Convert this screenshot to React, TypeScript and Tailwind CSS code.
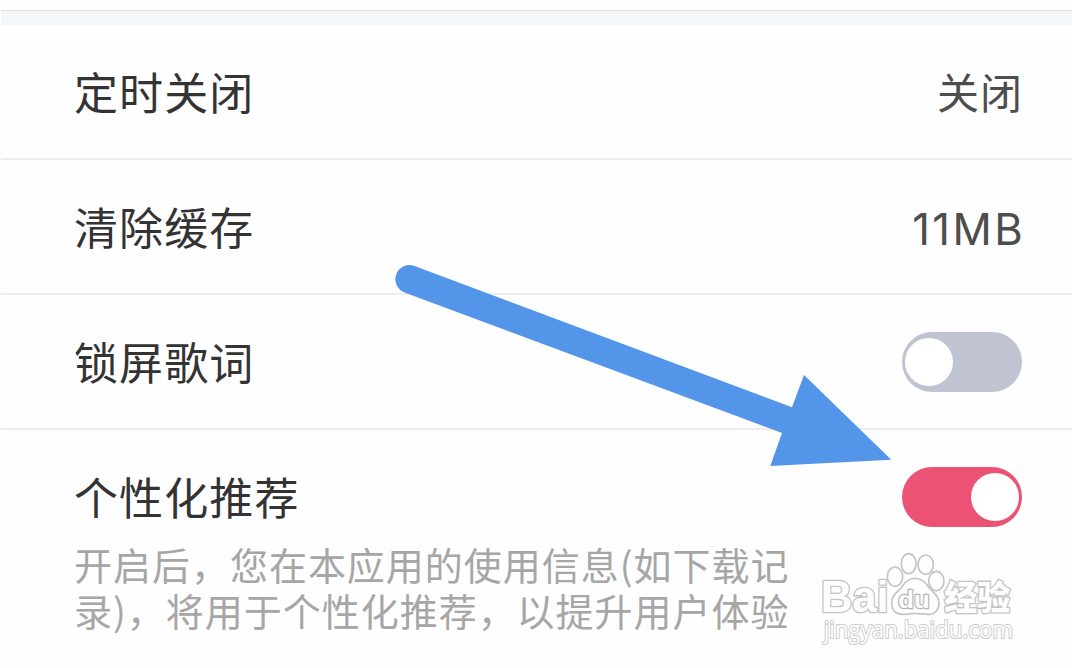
import React, { ReactNode } from 'react';

interface SwitchProps {
  on: boolean;
}

interface RowProps {
  label: string;
  note?: string[];
  last?: boolean;
  children: ReactNode;
}

const Switch: React.FC<SwitchProps> = ({ on }) => {
  return (
    <button
      type="button"
      role="switch"
      aria-checked={on}
      className={`flex h-[60px] w-[120px] shrink-0 items-center rounded-full px-[3px] ${on ? 'justify-end bg-[#ec5273]' : 'justify-start bg-[#c0c3d2]'}`}
    >
      <span className="h-12 w-12 rounded-full bg-white" />
    </button>
  );
};

const Row: React.FC<RowProps> = ({ label, note, last, children }) => {
  return (
    <div className={`pt-[37px] pr-[50px] pl-[73px] ${last ? '' : 'h-[135px] border-b-2 border-[#ededed]'}`}>
      <div className="flex h-[60px] items-center justify-between">
        <span className="pb-px text-[44px] leading-[59px] tracking-[1.1px] text-[#333333]">{label}</span>
        {children}
      </div>
      {note && (
        <div className="mt-[14px] text-[38px] leading-[46px] tracking-[0.98px] whitespace-nowrap text-[#a6a6a6]">
          {note.map((line) => (
            <p key={line}>{line}</p>
          ))}
        </div>
      )}
    </div>
  );
};

const Arrow: React.FC = () => {
  return (
    <svg className="pointer-events-none absolute top-0 left-0" width="1072" height="668" viewBox="0 0 1072 668" fill="#5395e9">
      <path d="M414.5 266 792 407.3 804 375 891.3 459.7 770.3 466 782 433 404.5 292.5A14 14 0 0 1 414.5 266Z" />
    </svg>
  );
};

const Watermark: React.FC = () => {
  return (
    <svg
      className="pointer-events-none absolute top-[540px] left-[810px]"
      width="220"
      height="128"
      viewBox="0 0 660 384"
      fill="#fefefe"
      stroke="#c4c4c4"
      strokeWidth="5"
      strokeLinejoin="round"
    >
      <text x="32" y="217" fontSize="132" fontWeight="700" textLength="204" lengthAdjust="spacingAndGlyphs" paintOrder="stroke" strokeWidth="8" className="font-['Liberation_Sans',sans-serif]">
        Bai
      </text>
      <ellipse cx="255" cy="110" rx="23" ry="29" />
      <ellipse cx="296" cy="71" rx="22" ry="30" />
      <ellipse cx="347" cy="74" rx="23" ry="29" />
      <ellipse cx="379" cy="123" rx="23" ry="29" />
      <path d="M315 115C292 115 283 131 273 144C262 157 245 165 245 190C245 212 259 223 278 223C292 223 302 220 315 220C329 220 341 223 354 223C375 223 387 209 387 190C387 166 369 157 358 144C347 130 338 115 315 115Z" />
      <text x="265" y="203" fontSize="72" fontWeight="700" textLength="94" lengthAdjust="spacingAndGlyphs" paintOrder="stroke" strokeWidth="7" stroke="#b4b4b4" className="font-['Liberation_Sans',sans-serif]">
        du
      </text>
      <text x="403" y="209" fontSize="102" fontWeight="900" textLength="198" lengthAdjust="spacingAndGlyphs" paintOrder="stroke" strokeWidth="8" className="font-['Noto_Sans_CJK_SC',sans-serif]">
        经验
      </text>
      <text x="41" y="295" fontSize="69" fontWeight="500" textLength="568" lengthAdjust="spacingAndGlyphs" paintOrder="stroke" strokeWidth="6" stroke="#cccccc" className="font-['Open_Sans',sans-serif]">
        jingyan.baidu.com
      </text>
    </svg>
  );
};

const App: React.FC = () => {
  return (
    <div className="relative h-[668px] w-[1072px] overflow-hidden bg-[#fefefe] pl-px font-['Noto_Sans_CJK_SC',sans-serif]">
      <div className="mt-2.5 h-[15px] border-t border-[#dfdfdf] bg-[#f5f6f8]" />
      <Row label="定时关闭">
        <span className="pb-0.5 text-[42px] leading-[58px] tracking-[1px] -mr-px text-[#4d4d4d]">关闭</span>
      </Row>
      <Row label="清除缓存">
        <span className="-mr-[3px] pt-[5px] font-['Inter',sans-serif] text-[43.5px] leading-[55px] tracking-[2.4px] text-[#4d4d4d]">11MB</span>
      </Row>
      <Row label="锁屏歌词">
        <Switch on={false} />
      </Row>
      <Row
        label="个性化推荐"
        note={['开启后，您在本应用的使用信息(如下载记', '录)，将用于个性化推荐，以提升用户体验']}
        last
      >
        <Switch on />
      </Row>
      <Arrow />
      <Watermark />
    </div>
  );
};

export default App;
